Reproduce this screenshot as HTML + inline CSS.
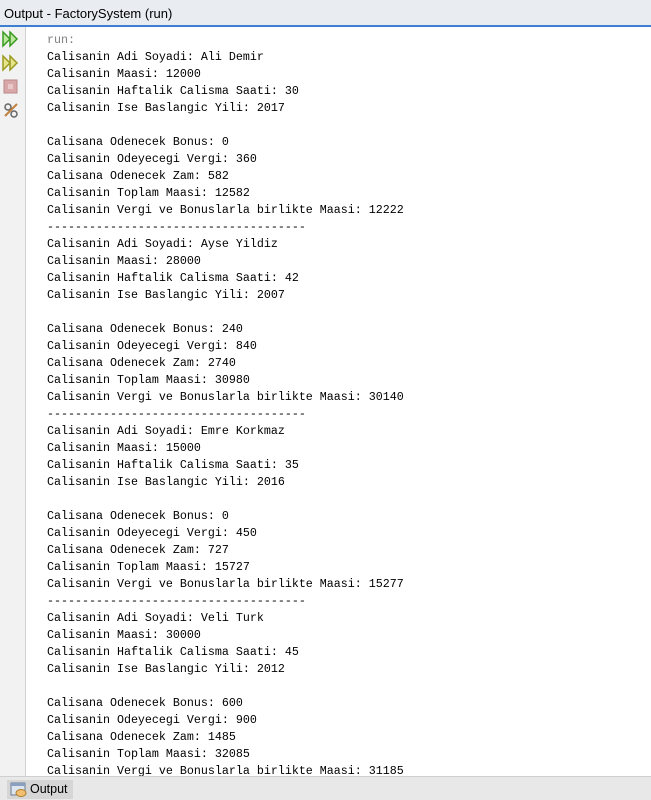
<!DOCTYPE html>
<html><head><style>
body{margin:0;width:651px;height:799px;overflow:hidden;background:#fff;font-family:"Liberation Sans",sans-serif;position:relative}
.title{position:absolute;left:0;top:0;width:651px;height:25px;background:#e9ecf1;border-bottom:2px solid #3d7ed3;font-size:13px;line-height:27px;color:#000;padding-left:4px;box-sizing:content-box}
.gutter{position:absolute;left:0;top:27px;width:25px;height:749px;background:#f2f2f2;border-right:1px solid #d0d0d0}
pre{position:absolute;left:47px;top:32px;margin:0;font-family:"Liberation Mono",monospace;font-size:11.67px;line-height:17px;color:#000}
.g{color:#808080}
.bottom{position:absolute;left:0;top:776px;width:651px;height:23px;background:#e8e8e8;border-top:1px solid #cfcfcf}
.tab{position:absolute;left:7px;top:3px;width:66px;height:19px;background:#d6d6d6;font-size:12.5px;line-height:19px}
</style></head><body>
<div class="title">Output - FactorySystem (run)</div>
<div class="gutter">
<svg width="25" height="100" style="position:absolute;left:0;top:0">
<path d="M3 5 L10 12 L3 19 Z M10 5 L17 12 L10 19 Z" fill="#bde8a0" stroke="#3a9a20" stroke-width="1.5"/>
<path d="M3 29 L10 36 L3 43 Z M10 29 L17 36 L10 43 Z" fill="#e6e48a" stroke="#9a9a20" stroke-width="1.5"/>
<rect x="4" y="53" width="13" height="13" fill="#d8a8a8" stroke="#b88"/>
<rect x="8" y="57" width="5" height="5" fill="#e8c8c8"/>
<circle cx="8" cy="80" r="3" fill="none" stroke="#666" stroke-width="1.5"/>
<circle cx="14" cy="87" r="3" fill="none" stroke="#666" stroke-width="1.5"/>
<path d="M5 89 L17 77" stroke="#c08040" stroke-width="2"/>
</svg>
</div>
<pre><span class="g">run:</span>
Calisanin Adi Soyadi: Ali Demir
Calisanin Maasi: 12000
Calisanin Haftalik Calisma Saati: 30
Calisanin Ise Baslangic Yili: 2017

Calisana Odenecek Bonus: 0
Calisanin Odeyecegi Vergi: 360
Calisana Odenecek Zam: 582
Calisanin Toplam Maasi: 12582
Calisanin Vergi ve Bonuslarla birlikte Maasi: 12222
-------------------------------------
Calisanin Adi Soyadi: Ayse Yildiz
Calisanin Maasi: 28000
Calisanin Haftalik Calisma Saati: 42
Calisanin Ise Baslangic Yili: 2007

Calisana Odenecek Bonus: 240
Calisanin Odeyecegi Vergi: 840
Calisana Odenecek Zam: 2740
Calisanin Toplam Maasi: 30980
Calisanin Vergi ve Bonuslarla birlikte Maasi: 30140
-------------------------------------
Calisanin Adi Soyadi: Emre Korkmaz
Calisanin Maasi: 15000
Calisanin Haftalik Calisma Saati: 35
Calisanin Ise Baslangic Yili: 2016

Calisana Odenecek Bonus: 0
Calisanin Odeyecegi Vergi: 450
Calisana Odenecek Zam: 727
Calisanin Toplam Maasi: 15727
Calisanin Vergi ve Bonuslarla birlikte Maasi: 15277
-------------------------------------
Calisanin Adi Soyadi: Veli Turk
Calisanin Maasi: 30000
Calisanin Haftalik Calisma Saati: 45
Calisanin Ise Baslangic Yili: 2012

Calisana Odenecek Bonus: 600
Calisanin Odeyecegi Vergi: 900
Calisana Odenecek Zam: 1485
Calisanin Toplam Maasi: 32085
Calisanin Vergi ve Bonuslarla birlikte Maasi: 31185</pre>
<div class="bottom"><div class="tab">
<svg width="18" height="16" style="position:absolute;left:3px;top:2px"><rect x="1" y="1" width="14" height="12" fill="#dde6f0" stroke="#6a7a90"/><rect x="1" y="1" width="14" height="3" fill="#8aa0c0"/><ellipse cx="11" cy="11" rx="5" ry="3.5" fill="#f0c070" stroke="#b08030"/></svg>
<span style="position:absolute;left:23px;top:0">Output</span></div></div>
</body></html>
